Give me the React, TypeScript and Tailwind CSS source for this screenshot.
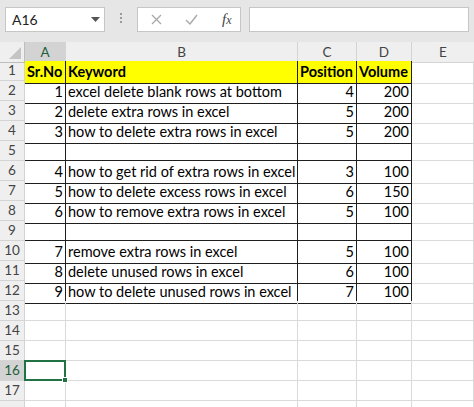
import React from "react";

type Row = { n: string; kw: string; pos: string; vol: string };

const DATA: Row[] = [
  { n: "1", kw: "excel delete blank rows at bottom", pos: "4", vol: "200" },
  { n: "2", kw: "delete extra rows in excel", pos: "5", vol: "200" },
  { n: "3", kw: "how to delete extra rows in excel", pos: "5", vol: "200" },
  { n: "", kw: "", pos: "", vol: "" },
  { n: "4", kw: "how to get rid of extra rows in excel", pos: "3", vol: "100" },
  { n: "5", kw: "how to delete excess rows in excel", pos: "6", vol: "150" },
  { n: "6", kw: "how to remove extra rows in excel", pos: "5", vol: "100" },
  { n: "", kw: "", pos: "", vol: "" },
  { n: "7", kw: "remove extra rows in excel", pos: "5", vol: "100" },
  { n: "8", kw: "delete unused rows in excel", pos: "6", vol: "100" },
  { n: "9", kw: "how to delete unused rows in excel", pos: "7", vol: "100" },
];

const cols = "grid grid-cols-[25px_41px_232px_59px_55px_1fr]";

function RowHead({ n, active }: { n?: number; active?: boolean }) {
  return (
    <div
      className={`flex h-5 items-center justify-center border-r border-b border-[#d4d4d4] text-[13.5px] ${
        active ? "bg-[#d3d3d3] text-[#1d5f3a]" : "bg-[#efefef] text-[#444]"
      }`}
    >
      {n}
    </div>
  );
}

export default function App() {
  const dark = "border-r border-b border-[#1e1e1e]";
  const grid = "border-r border-b border-[#dadada]";
  return (
    <div
      className="h-[407px] w-[474px] overflow-hidden bg-white text-[14.5px] text-black"
      style={{ fontFamily: "Lato, 'Liberation Sans', sans-serif" }}
    >
      {/* formula bar */}
      <div className="flex h-[42px] items-start bg-[#e6e6e6] px-[5px] pt-[7px]">
        <div className="flex h-[25px] w-[100px] items-center justify-between border border-[#c6c6c6] bg-white pl-[6px] pr-[4px] text-[14px] text-[#222]">
          <span>A16</span>
          <svg width="9" height="5" viewBox="0 0 9 5">
            <path d="M0 0 L9 0 L4.5 5 Z" fill="#555" />
          </svg>
        </div>
        <div className="flex w-[32px] flex-col items-center justify-center gap-[2px] pt-[6px]">
          <span className="h-[2px] w-[2px] bg-[#9a9a9a]" />
          <span className="h-[2px] w-[2px] bg-[#9a9a9a]" />
          <span className="h-[2px] w-[2px] bg-[#9a9a9a]" />
        </div>
        <div className="flex h-[25px] w-[104px] items-center border border-[#c6c6c6] bg-white">
          <svg className="ml-[13px]" width="11" height="11" viewBox="0 0 11 11">
            <path d="M1 1 L10 10 M10 1 L1 10" stroke="#a8a8a8" strokeWidth="1.3" />
          </svg>
          <svg className="ml-[23px]" width="13" height="11" viewBox="0 0 13 11">
            <path d="M1 6 L5 10 L12 1" stroke="#a8a8a8" strokeWidth="1.4" fill="none" />
          </svg>
          <span
            className="ml-[24px] text-[15px] italic text-[#444]"
            style={{ fontFamily: "'Liberation Serif', serif" }}
          >
            f<span className="text-[12px]">x</span>
          </span>
        </div>
        <div className="ml-[8px] h-[25px] flex-1 border border-[#c6c6c6] bg-white" />
      </div>

      {/* column headers */}
      <div className={`${cols} h-[19px] text-[13.5px] text-[#444]`}>
        <div className="relative border-r border-b border-[#bdbdbd] bg-[#efefef]">
          <svg className="absolute right-[3px] bottom-[3px]" width="12" height="12" viewBox="0 0 12 12">
            <path d="M12 0 L12 12 L0 12 Z" fill="#c4c4c4" />
          </svg>
        </div>
        <div className="flex items-center justify-center border-r border-b border-r-[#d4d4d4] border-b-[#bdbdbd] bg-[#d3d3d3] text-[#1d5f3a]">
          A
        </div>
        <div className="flex items-center justify-center border-r border-b border-[#d4d4d4] bg-[#efefef]">B</div>
        <div className="flex items-center justify-center border-r border-b border-[#d4d4d4] bg-[#efefef]">C</div>
        <div className="flex items-center justify-center border-r border-b border-[#d4d4d4] bg-[#efefef]">D</div>
        <div className="flex items-center justify-center border-b border-[#d4d4d4] bg-[#efefef]">E</div>
      </div>

      {/* row 1 header */}
      <div className={`${cols} h-5`}>
        <RowHead n={1} />
        <div className={`${dark} flex items-center bg-[#ffff00] pl-[2px] font-bold`}>Sr.No</div>
        <div className={`${dark} flex items-center bg-[#ffff00] pl-[2px] font-bold`}>Keyword</div>
        <div className={`${dark} flex items-center bg-[#ffff00] pl-[2px] font-bold`}>Position</div>
        <div className={`${dark} flex items-center bg-[#ffff00] pl-[2px] font-bold`}>Volume</div>
        <div className={grid} />
      </div>

      {DATA.map((r, i) => (
        <div key={i} className={`${cols} h-5`}>
          <RowHead n={i + 2} />
          <div className={`${dark} flex items-center justify-end pr-[2px]`}>{r.n}</div>
          <div className={`${dark} flex items-center whitespace-nowrap pl-[2px]`}>{r.kw}</div>
          <div className={`${dark} flex items-center justify-end pr-[2px]`}>{r.pos}</div>
          <div className={`${dark} flex items-center justify-end pr-[2px]`}>{r.vol}</div>
          <div className={grid} />
        </div>
      ))}

      {[13, 14, 15, 16, 17, 0].map((n) => (
        <div key={n} className={`${cols} h-5`}>
          <RowHead n={n || undefined} active={n === 16} />
          {n === 16 ? (
            <div className="relative -mt-px -ml-px h-[21px] border-2 border-[#217346]">
              <span className="absolute -right-[4px] -bottom-[4px] h-[6px] w-[6px] border border-white bg-[#217346]" />
            </div>
          ) : (
            <div className={grid} />
          )}
          <div className={grid} />
          <div className={grid} />
          <div className={grid} />
          <div className={grid} />
        </div>
      ))}
    </div>
  );
}
